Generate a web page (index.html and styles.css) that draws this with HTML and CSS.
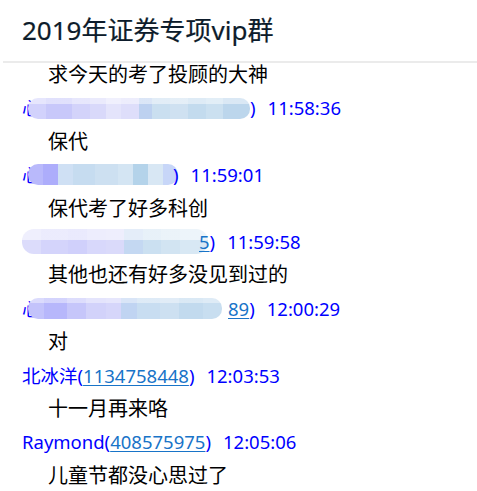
FILE: index.html
```html
<!DOCTYPE html>
<html lang="zh-CN">
<head>
<meta charset="utf-8">
<title>2019年证券专项vip群</title>
<link rel="stylesheet" href="styles.css">
</head>
<body>
<header class="header">
  <h1 class="title">2019年证券专项vip群</h1>
</header>
<main class="list">
  <div class="msg">求今天的考了投顾的大神</div>
  <div class="meta"><span class="sender">心</span><span class="mask mask-1"></span><span class="sender">)</span><span class="time">11:58:36</span></div>
  <div class="msg">保代</div>
  <div class="meta"><span class="sender">心</span><span class="mask mask-2"></span><span class="sender">)</span><span class="time">11:59:01</span></div>
  <div class="msg">保代考了好多科创</div>
  <div class="meta"><span class="mask mask-3"></span><span class="sender"><a class="qq" href="#">5</a>)</span><span class="time">11:59:58</span></div>
  <div class="msg">其他也还有好多没见到过的</div>
  <div class="meta"><span class="sender">心</span><span class="mask mask-4"></span><span class="sender"><a class="qq" href="#">89</a>)</span><span class="time">12:00:29</span></div>
  <div class="msg">对</div>
  <div class="meta"><span class="sender">北冰洋(<a class="qq" href="#">1134758448</a>)</span><span class="time">12:03:53</span></div>
  <div class="msg">十一月再来咯</div>
  <div class="meta"><span class="sender">Raymond(<a class="qq" href="#">408575975</a>)</span><span class="time">12:05:06</span></div>
  <div class="msg">儿童节都没心思过了</div>
</main>
</body>
</html>
```
FILE: styles.css
```css
html, body {
  margin: 0;
  padding: 0;
  background: #ffffff;
}
body {
  font-family: "Noto Sans", "Noto Sans CJK SC", sans-serif;
  overflow: hidden;
  height: 491px;
}
.header {
  margin-left: 3px;
  height: 61px;
  border-bottom: 2px solid #ebebeb;
  display: flex;
  align-items: center;
  position: relative;
  z-index: 2;
  background: #fff;
}
.title {
  margin: 0 0 0 19px;
  font-size: 26px;
  font-weight: 400;
  color: #0d1c2b;
  line-height: 1;
  position: relative;
  top: -1px;
  -webkit-text-stroke: 0.2px #0d1c2b;
}
.list {
  margin-top: -5px;
  padding-left: 22px;
}
.msg {
  height: 33.4px;
  line-height: 33.4px;
  padding-left: 26px;
  font-size: 20px;
  color: #000;
}
.meta {
  height: 33.4px;
  line-height: 33.4px;
  font-size: 18.5px;
  color: #0000ff;
  white-space: nowrap;
  display: flex;
  align-items: center;
}
.sender {
  color: #0000ff;
}
.qq {
  color: #1874c8;
  text-decoration: underline;
  text-underline-offset: 2px;
}
.time {
  color: #0000ff;
  margin-left: 12px;
}
.mask {
  display: inline-block;
  height: 21px;
  border-radius: 10px;
  background:
    linear-gradient(to bottom, rgba(255,255,255,0.45) 0 28%, rgba(255,255,255,0) 28%),
    linear-gradient(to right,
      #d2d2fc 0 8%, #c8c8fa 8% 20%, #d3d3fa 20% 28%, #d9d9fa 28% 35%,
      #e4e4fb 35% 42%, #dedefa 42% 50%, #bdd1f0 50% 56%, #cadff0 56% 64%,
      #cfe1f1 64% 72%, #c3dbee 72% 80%, #cbe0f0 80% 88%, #bcd6ec 88% 100%);
}
.mask-1 {
  width: 222px;
  margin-left: -12.5px;
  margin-right: 0;
}
.mask-2 {
  width: 150px;
  margin-left: -12.5px;
  margin-right: -5px;
  background:
    linear-gradient(to right,
      #b9b9fb 0 10%, #adadfb 10% 20%, #cfe0f4 20% 30%, #c6dcf0 30% 45%,
      #cde0f1 45% 60%, #d4e5f3 60% 70%, #b4d3ea 70% 80%, #d8e7f4 80% 90%, #c7d6f8 90% 100%);
}
.mask-3 {
  width: 186px;
  height: 25px;
  margin-right: -9px;
  border-radius: 12px;
  background:
    linear-gradient(to bottom, rgba(255,255,255,0.55) 0 45%, rgba(255,255,255,0) 45%),
    linear-gradient(to right,
      #dcdcfb 0 10%, #d4d4fb 10% 25%, #d0d0fb 25% 35%, #d8d8fb 35% 45%,
      #dadafa 45% 55%, #c4d8f2 55% 65%, #cbe0f1 65% 75%, #d2e4f2 75% 85%, #d8e8f4 85% 100%);
}
.mask-4 {
  width: 194px;
  margin-left: -12.5px;
  margin-right: 6px;
  background:
    linear-gradient(to bottom, rgba(255,255,255,0.4) 0 25%, rgba(255,255,255,0) 25%),
    linear-gradient(to right,
      #c3c3fb 0 8%, #b7b7fb 8% 20%, #c6c6fa 20% 30%, #d2d2fa 30% 40%,
      #d6d6fa 40% 48%, #c0d4f2 48% 56%, #c8ddf1 56% 68%, #cde0f1 68% 78%,
      #c2daee 78% 90%, #c8def0 90% 100%);
}
```
